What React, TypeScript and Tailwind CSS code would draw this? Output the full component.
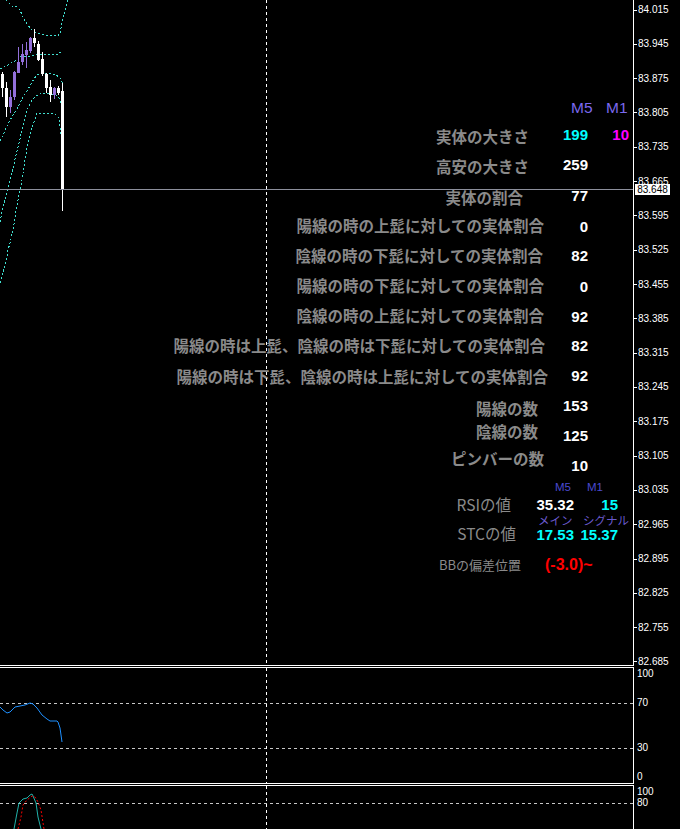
import React from "react";

const prices = [
  "84.015", "83.945", "83.875", "83.805", "83.735", "83.665", "83.595", "83.525", "83.455", "83.385",
  "83.315", "83.245", "83.175", "83.105", "83.035", "82.965", "82.895", "82.825", "82.755", "82.685",
];

// [bodyTop, bodyBottom, wickTop, wickBottom, bear]
const candles: [number, number, number, number, boolean][] = [
  [74, 88, 72, 97, false],
  [88, 107, 82, 117, false],
  [97, 107, 90, 113, true],
  [72, 97, 71, 100, true],
  [62, 73, 47, 73, true],
  [54, 62, 44, 65, true],
  [50, 55, 42, 68, true],
  [38, 51, 37, 53, true],
  [38, 43, 29, 47, false],
  [44, 60, 41, 61, false],
  [59, 74, 52, 76, false],
  [74, 88, 73, 93, false],
  [87, 95, 80, 102, false],
  [88, 95, 87, 99, true],
  [88, 93, 86, 95, false],
  [91, 189, 83, 211, false],
];

const bands = [
  "6,0 9,3 12,6 17,7 20,10 22,15 25,21 28,25 31,29 35,32 40,34 46,35 52,35 58,36 60,33 62,23 65,10 68,0",
  "0,69 4,67 8,65 13,62 17,60 20,57 25,56 30,56 35,55 40,54 47,54 53,55 58,54 61,52",
  "0,141 3,135 6,128 9,122 13,115 17,109 20,103 23,97 27,91 31,84 34,79 37,75 42,73 47,73 52,74 56,75 60,78 62,82 62,100",
  "0,283 3,272 6,262 8,250 10,243 13,230 15,218 17,205 20,190 22,180 25,160 28,142 32,128 37,113 43,113 55,114 59,118 62,143",
  "0,222 2,212 4,203 7,193 10,180 13,168 16,155 19,143 22,130 25,118 28,108 32,100 36,96 42,93 50,94 56,95 59,98 62,107",
];

function Label({
  className = "",
  size = "text-[15.5px] font-bold",
  children,
}: {
  className?: string;
  size?: string;
  children: React.ReactNode;
}) {
  return (
    <span
      className={`relative shrink-0 whitespace-nowrap text-right font-['Noto_Sans_CJK_JP',sans-serif] leading-none text-[#8a8a8a] ${size} ${className}`}
    >
      {children}
    </span>
  );
}

function Num({
  className = "",
  size = "text-[15px]",
  children,
}: {
  className?: string;
  size?: string;
  children: React.ReactNode;
}) {
  return (
    <span
      className={`relative shrink-0 whitespace-nowrap font-['Liberation_Sans',Arial,sans-serif] font-bold leading-none ${size} ${className}`}
    >
      {children}
    </span>
  );
}

function VLine({ h }: { h: number }) {
  return (
    <svg className="pointer-events-none absolute left-0 top-0" width="633" height={h}>
      <line x1="266.5" y1="0" x2="266.5" y2={h} stroke="#ffffff" strokeDasharray="3 3" />
    </svg>
  );
}

function MainChart() {
  return (
    <svg className="absolute left-0 top-0" width="633" height="665" shapeRendering="crispEdges">
      {bands.map((pts, i) => (
        <polyline key={i} points={pts} fill="none" stroke="#40e0d0" strokeWidth="1" strokeDasharray="2 2" />
      ))}
      {candles.map(([bt, bb, wt, wb, bear], i) => {
        const x = 1 + i * 4;
        const c = bear ? "#9370db" : "#ffffff";
        return (
          <g key={i}>
            <rect x={x + 1} y={wt} width="1" height={wb - wt} fill={c} />
            <rect x={x} y={bt} width="3" height={bb - bt} fill={c} />
          </g>
        );
      })}
      <line x1="0" y1="189.5" x2="633" y2="189.5" stroke="#8c8f9c" />
    </svg>
  );
}

function InfoPanel() {
  return (
    <div className="absolute left-[160px] top-[94px] flex w-[473px] flex-col">
      <div className="flex h-[28px] items-center font-['Liberation_Sans',Arial,sans-serif] text-[15.5px] leading-none text-[#7b68ee]">
        <span className="w-[411px] shrink-0" />
        <span className="w-[35px] shrink-0">M5</span>
        <span>M1</span>
      </div>
      <div className="flex h-[29px] items-center">
        <Label className="w-[369px]">実体の大きさ</Label>
        <Num className="top-[-2px] w-[59px] text-right text-[#00ffff]">199</Num>
        <Num className="top-[-2px] w-[41px] text-right text-[#ff00ff]">10</Num>
      </div>
      <div className="flex h-[31px] items-center">
        <Label className="w-[369px]">高安の大きさ</Label>
        <Num className="top-[-2px] w-[59px] text-right text-white">259</Num>
      </div>
      <div className="flex h-[30px] items-center">
        <Label className="top-[1px] w-[363px]">実体の割合</Label>
        <Num className="top-[-2px] w-[65px] text-right text-white">77</Num>
      </div>
      <div className="flex h-[28px] items-center">
        <Label className="w-[384px]">陽線の時の上髭に対しての実体割合</Label>
        <Num className="w-[44px] text-right text-white">0</Num>
      </div>
      <div className="flex h-[31px] items-center">
        <Label className="w-[383px]">陰線の時の下髭に対しての実体割合</Label>
        <Num className="w-[45px] text-right text-white">82</Num>
      </div>
      <div className="flex h-[30px] items-center">
        <Label className="w-[384px]">陽線の時の下髭に対しての実体割合</Label>
        <Num className="w-[44px] text-right text-white">0</Num>
      </div>
      <div className="flex h-[30px] items-center">
        <Label className="w-[384px]">陰線の時の上髭に対しての実体割合</Label>
        <Num className="w-[44px] text-right text-white">92</Num>
      </div>
      <div className="flex h-[30px] items-center">
        <Label className="w-[385px]">陽線の時は上髭、陰線の時は下髭に対しての実体割合</Label>
        <Num className="top-[-1px] w-[43px] text-right text-white">82</Num>
      </div>
      <div className="flex h-[32px] items-center">
        <Label className="w-[388px]">陽線の時は下髭、陰線の時は上髭に対しての実体割合</Label>
        <Num className="top-[-2px] w-[40px] text-right text-white">92</Num>
      </div>
      <div className="flex h-[27px] items-center">
        <Label className="top-[2px] w-[378px]">陽線の数</Label>
        <Num className="top-[-1px] w-[50px] text-right text-white">153</Num>
      </div>
      <div className="flex h-[25px] items-center">
        <Label className="top-[-1px] w-[378px]">陰線の数</Label>
        <Num className="top-[3px] w-[50px] text-right text-white">125</Num>
      </div>
      <div className="flex h-[28px] items-center">
        <Label className="w-[384px]">ピンバーの数</Label>
        <Num className="top-[6px] w-[44px] text-right text-white">10</Num>
      </div>
      <div className="flex h-[23px] items-center font-['Liberation_Sans',Arial,sans-serif] text-[11.5px] leading-none text-[#4a4ad0]">
        <span className="w-[395px] shrink-0" />
        <span className="relative top-[3px] w-[32px] shrink-0">M5</span>
        <span className="relative top-[3px]">M1</span>
      </div>
      <div className="flex h-[17px] items-center">
        <Label className="w-[351px]" size="text-[15.5px] font-normal">
          RSIの値
        </Label>
        <Num className="w-[63px] text-right text-white">35.32</Num>
        <Num className="w-[44px] text-right text-[#00ffff]">15</Num>
      </div>
      <div className="flex h-[16px] items-center font-['Noto_Sans_CJK_JP',sans-serif] text-[11.5px] leading-none text-[#6a5acd]">
        <span className="w-[378px] shrink-0" />
        <span className="w-[45px] shrink-0">メイン</span>
        <span>シグナル</span>
      </div>
      <div className="flex h-[10px] items-center">
        <Label className="w-[356px]" size="text-[15.5px] font-normal">
          STCの値
        </Label>
        <Num className="w-[58px] text-right text-[#00ffff]">17.53</Num>
        <Num className="w-[44px] text-right text-[#00ffff]">15.37</Num>
      </div>
      <div className="flex h-[50px] items-center">
        <Label className="w-[361px]" size="text-[13px] font-normal">
          BBの偏差位置
        </Label>
        <Num className="top-[1px] ml-[24px] text-[#ff0000]" size="text-[16px]">
          (-3.0)~
        </Num>
      </div>
    </div>
  );
}

function PriceAxis() {
  return (
    <div className="relative flex-1">
      <div className="flex h-[668px] flex-col justify-between pt-[4px]">
        {prices.map((p) => (
          <div key={p} className="flex h-[12px] items-center">
            <span className="h-px w-[3px] bg-white" />
            <span className="ml-[1px] font-['Liberation_Sans',Arial,sans-serif] text-[10px] leading-none text-white">
              {p}
            </span>
          </div>
        ))}
      </div>
      <div className="absolute left-[1px] top-[184px] h-[11px] w-[35px] bg-white text-center font-['Liberation_Sans',Arial,sans-serif] text-[10px] leading-[11px] text-black">
        83.648
      </div>
    </div>
  );
}

function RsiChart() {
  return (
    <svg className="absolute left-0 top-0" width="633" height="115">
      <g shapeRendering="crispEdges">
        <line x1="0" y1="35.5" x2="633" y2="35.5" stroke="#c8c8c8" strokeDasharray="3 3" />
        <line x1="0" y1="80.5" x2="633" y2="80.5" stroke="#c8c8c8" strokeDasharray="3 3" />
        <line x1="266.5" y1="0" x2="266.5" y2="115" stroke="#ffffff" strokeDasharray="3 3" />
      </g>
      <polyline
        points="0,39 3,42 7,45 10,44 15,39 20,38 25,37 30,35 33,36 37,40 42,47 47,51 50,53 53,53 57,53 58,54 60,60 61,67 62,74"
        fill="none"
        stroke="#1e90ff"
        strokeWidth="1"
      />
    </svg>
  );
}

function StochChart() {
  return (
    <svg className="absolute left-0 top-0" width="633" height="43">
      <g shapeRendering="crispEdges">
        <line x1="0" y1="17.5" x2="633" y2="17.5" stroke="#c8c8c8" strokeDasharray="3 3" />
        <line x1="266.5" y1="0" x2="266.5" y2="43" stroke="#ffffff" strokeDasharray="3 3" />
      </g>
      <polyline
        points="14,43 17,27 19,17 23,13 27,12 30,9 32,8 33,10 36,17 38,31 41,43"
        fill="none"
        stroke="#20b2aa"
        strokeWidth="1"
      />
      <polyline
        points="18,43 21,31 23,19 27,14 32,10 35,11 38,16 41,24 44,43"
        fill="none"
        stroke="#ff0000"
        strokeWidth="1"
        strokeDasharray="2 2"
      />
    </svg>
  );
}

const axisText = "font-['Liberation_Sans',Arial,sans-serif] text-[10px] text-white";

export default function App() {
  return (
    <div className="flex h-[829px] w-[680px] flex-col overflow-hidden bg-black">
      {/* main price window */}
      <div className="flex h-[666px] shrink-0">
        <div className="relative w-[634px] shrink-0 border-b border-r border-white">
          <MainChart />
          <InfoPanel />
          <VLine h={665} />
        </div>
        <PriceAxis />
      </div>

      {/* RSI */}
      <div className="mt-[1px] flex h-[117px] shrink-0">
        <div className="relative w-[634px] shrink-0 border-y border-r border-white">
          <RsiChart />
        </div>
        <div className="flex flex-1 flex-col pl-[3px]">
          <span className={`mt-[1px] h-[12px] leading-[12px] ${axisText}`}>100</span>
          <span className={`mt-[17px] h-[12px] leading-[12px] ${axisText}`}>70</span>
          <span className={`mt-[33px] h-[12px] leading-[12px] ${axisText}`}>30</span>
          <span className={`mt-[17px] h-[12px] leading-[12px] ${axisText}`}>0</span>
        </div>
      </div>

      {/* Stochastic */}
      <div className="mt-[1px] flex flex-1">
        <div className="relative w-[634px] shrink-0 border-r border-t border-white">
          <StochChart />
        </div>
        <div className="flex flex-1 flex-col pl-[3px]">
          <span className={`mt-[2px] h-[10px] leading-[10px] ${axisText}`}>100</span>
          <span className={`mt-[1px] h-[10px] leading-[10px] ${axisText}`}>80</span>
        </div>
      </div>
    </div>
  );
}
